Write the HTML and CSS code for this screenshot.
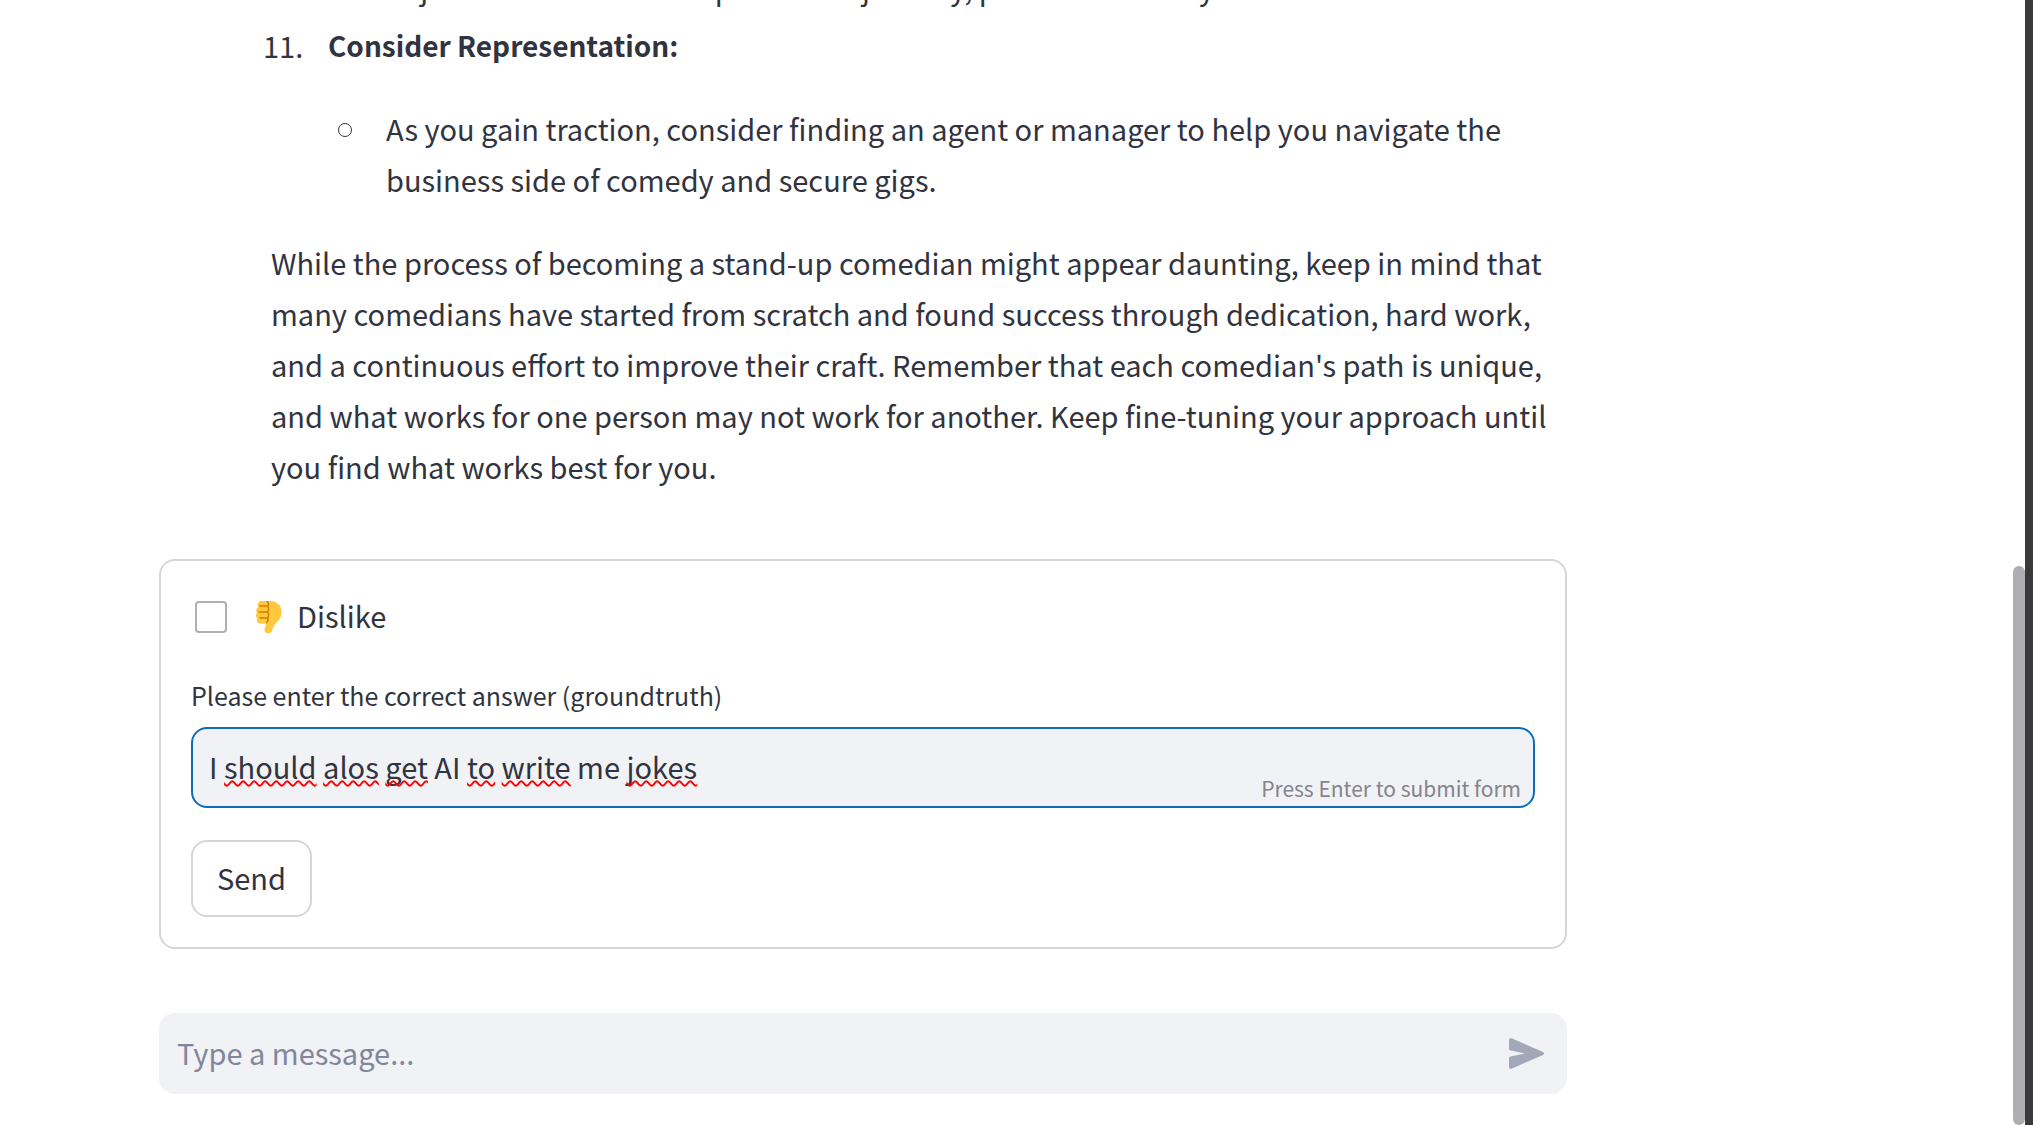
FILE: index.html
```html
<!DOCTYPE html>
<html lang="en">
<head>
<meta charset="utf-8">
<meta name="viewport" content="width=device-width, initial-scale=1">
<title>Chat feedback</title>
<link rel="stylesheet" href="styles.css">
</head>
<body>
<div class="app">
  <main class="column">
    <article class="message">
      <ol class="steps" start="10">
        <li>
          <ul class="details">
            <li>Rejection is an essential part of the journey, persistence is key.</li>
          </ul>
        </li>
        <li>
          <p class="step-title"><strong>Consider Representation:</strong></p>
          <ul class="details">
            <li>As you gain traction, consider finding an agent or manager to help you navigate the business side of comedy and secure gigs.</li>
          </ul>
        </li>
      </ol>
      <p>While the process of becoming a stand-up comedian might appear daunting, keep in mind that many comedians have started from scratch and found success through dedication, hard work, and a continuous effort to improve their craft. Remember that each comedian's path is unique, and what works for one person may not work for another. Keep fine-tuning your approach until you find what works best for you.</p>
    </article>

    <form class="feedback">
      <label class="dislike">
        <input class="tick" type="checkbox">
        <svg class="thumb" viewBox="0 0 26 34" aria-hidden="true">
          <path fill="#ffc83d" d="M5 1h9c7 0 11.500 4 11.500 11 0 5-2 8-5.500 11-2 2-3 4-4 8-1 3-7 3-7.500-.5-.2-2 1-4 1.500-7H4c-3 0-4-3-2.500-5-2-1.500-2-4-.5-5.500-1.500-2-.8-4.500 1-5.200C1 4 2.500 1 5 1z"/>
          <path fill="none" stroke="#d67d00" stroke-width="1.500" stroke-linecap="round" d="M4 6h7M3 12h8M4 18h7M11 1.500c2 1 2 3 .5 4.500 1.500 1.500 1.500 4.500 0 6 1.500 1.500 1.500 4.500 0 6 1 1.500.5 3.500-1 4.500"/>
        </svg>
        <span class="dislike-text">Dislike</span>
      </label>
      <label class="field-label" for="answer">Please enter the correct answer (groundtruth)</label>
      <div class="field">
        <input class="answer" id="answer" type="text" value="I should alos get AI to write me jokes" spellcheck="false">
        <div class="spelling" aria-hidden="true">I <u>should</u> <u>alos</u> <u>get</u> AI <u>to</u> <u>write</u> me <u>jokes</u></div>
        <span class="hint">Press Enter to submit form</span>
      </div>
      <button class="send" type="submit">Send</button>
    </form>

    <form class="composer">
      <input class="composer-input" type="text" placeholder="Type a message..." aria-label="Type a message">
      <button class="composer-send" type="button" aria-label="Send message">
        <svg viewBox="0 0 36 31" aria-hidden="true"><path fill="#a3a8b8" d="M0 2C0 .5 1.200-.2 2.600.3l31.400 13.600c1.400.7 1.400 2.300 0 3L2.600 30.700C1.200 31.300 0 30.500 0 29V20.500c0-1 .6-1.700 1.500-1.900L16 15.500 1.500 12.500C.6 12.300 0 11.500 0 10.600z"/></svg>
      </button>
    </form>
  </main>
  <div class="scrollbar" aria-hidden="true"><div class="scroll-thumb"></div></div>
</div>
</body>
</html>
```
FILE: styles.css
```css
* { box-sizing: border-box; }

body {
  margin: 0;
  background: #fff;
  color: #31333f;
  font-family: "Noto Sans CJK SC", "Open Sans", sans-serif;
  font-size: 29px;
  line-height: 51px;
}

p, ul, ol { margin: 0; padding: 0; }

.app {
  display: flex;
  height: 100vh;
  overflow: hidden;
}

.column {
  flex: 1;
  padding-left: 159px;
  padding-right: 446px;
}

.message {
  margin-top: -38px;
  padding-left: 112px;
  padding-right: 16px;
}

.steps {
  padding-left: 57px;
  margin-bottom: 32px;
  list-style: none;
  counter-reset: step 9;
}

.steps > li { counter-increment: step; }
.steps > li + li { margin-top: 7px; }

.step-title {
  display: flex;
  margin-bottom: 32px;
}

.step-title strong { font-size: 28px; }

.step-title::before {
  content: counter(step) ".";
  width: 65px;
  margin-left: -65px;
}

.details {
  padding-left: 58px;
  list-style: none;
}

.details > li { position: relative; }

.step-title + .details > li::before {
  content: "";
  position: absolute;
  left: -48px;
  top: 20px;
  width: 12px;
  height: 12px;
  border: 1px solid #31333f;
  border-radius: 50%;
}

.feedback {
  display: flex;
  flex-direction: column;
  align-items: flex-start;
  margin-top: 67px;
  padding: 30px;
  border: 2px solid #d6d6d8;
  border-radius: 16px;
}

.dislike {
  display: flex;
  align-items: center;
  height: 52px;
  padding-left: 4px;
}

.dislike-text { padding-bottom: 4px; }

.tick {
  appearance: none;
  width: 32px;
  height: 32px;
  margin: 0 29px 0 0;
  border: 2px solid #afafb5;
  border-radius: 4px;
  background: #fff;
}

.thumb {
  width: 26px;
  height: 34px;
  margin-right: 15px;
}

.field-label {
  margin-top: 30px;
  margin-bottom: 10px;
  font-size: 25px;
  line-height: 44px;
}

.field {
  position: relative;
  width: 100%;
  height: 81px;
  border: 2px solid #0f6cbd;
  border-radius: 16px;
  background: #f0f2f6;
}

.answer, .spelling {
  width: 100%;
  height: 77px;
  padding: 0 16px 4px;
  line-height: 73px;
}

.answer {
  display: block;
  border: 0;
  outline: 0;
  background: none;
  color: inherit;
  font: inherit;
}

.spelling {
  position: absolute;
  inset: 0;
  color: transparent;
  pointer-events: none;
}

.spelling u {
  text-decoration: underline wavy #f00 2px;
  text-decoration-skip-ink: none;
  text-underline-offset: 2px;
}

.hint {
  position: absolute;
  right: 12px;
  bottom: 0;
  color: #83848c;
  font-size: 21px;
  line-height: 36px;
}

.send {
  height: 77px;
  margin-top: 32px;
  padding: 0 24px 2px;
  border: 2px solid #d6d6d8;
  border-radius: 16px;
  background: #fff;
  color: inherit;
  font: inherit;
}

.composer {
  display: flex;
  align-items: center;
  height: 81px;
  margin-top: 64px;
  padding: 0 22px 0 18px;
  border-radius: 16px;
  background: #f0f2f6;
}

.composer-input {
  flex: 1;
  padding: 0 0 2px;
  border: 0;
  outline: 0;
  background: none;
  color: inherit;
  font: inherit;
}

.composer-input::placeholder { color: #83869a; opacity: 1; }

.composer-send {
  display: flex;
  padding: 0;
  border: 0;
  background: none;
}

.composer-send svg { width: 36px; height: 31px; }

.scrollbar {
  width: 20px;
  padding-top: 566px;
  border-right: 8px solid #3a3a3a;
}

.scroll-thumb {
  width: 12px;
  height: 100%;
  border-radius: 6px;
  background: #adadb3;
}
```
